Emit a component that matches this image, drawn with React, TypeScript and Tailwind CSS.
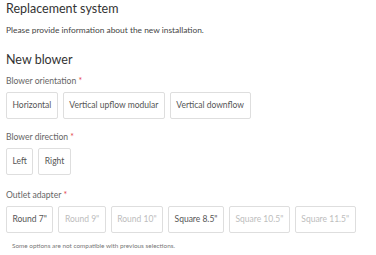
import React from 'react';

interface Option {
  label: string;
  disabled?: boolean;
}

const ORIENTATIONS: Option[] = [
  { label: 'Horizontal' },
  { label: 'Vertical upflow modular' },
  { label: 'Vertical downflow' },
];

const DIRECTIONS: Option[] = [{ label: 'Left' }, { label: 'Right' }];

const ADAPTERS: Option[] = [
  { label: 'Round 7"' },
  { label: 'Round 9"', disabled: true },
  { label: 'Round 10"', disabled: true },
  { label: 'Square 8.5"' },
  { label: 'Square 10.5"', disabled: true },
  { label: 'Square 11.5"', disabled: true },
];

function FieldLabel({ children }: { children: React.ReactNode }) {
  return (
    <div className="text-[8.6px] leading-[12px] text-[#666]">
      {children} <span className="text-[#e5484d]">*</span>
    </div>
  );
}

function OptionGroup({ options }: { options: Option[] }) {
  return (
    <div className="flex flex-wrap gap-[5px] mt-[5px]">
      {options.map((o) => (
        <button
          key={o.label}
          className={`h-[27px] px-[5.5px] rounded-[2px] border border-[#dedede] bg-white text-[8.5px] ${
            o.disabled ? 'text-[#bdbdbd]' : 'text-[#555]'
          }`}
        >
          {o.label}
        </button>
      ))}
    </div>
  );
}

export default function App() {
  return (
    <div className="w-[376px] h-[255px] bg-white px-[6px] pt-[1px]" style={{ fontFamily: "Lato, 'Open Sans', sans-serif" }}>
      <h2 className="text-[12.5px] leading-[15px] text-[#333]">Replacement system</h2>
      <p className="text-[8.4px] leading-[11px] text-[#444] mt-[9px]">Please provide information about the new installation.</p>

      <h3 className="text-[12.5px] leading-[15px] text-[#333] mt-[16px]">New blower</h3>

      <div className="mt-[8px]">
        <FieldLabel>Blower orientation</FieldLabel>
        <OptionGroup options={ORIENTATIONS} />
      </div>

      <div className="mt-[12px]">
        <FieldLabel>Blower direction</FieldLabel>
        <OptionGroup options={DIRECTIONS} />
      </div>

      <div className="mt-[14px]">
        <FieldLabel>Outlet adapter</FieldLabel>
        <OptionGroup options={ADAPTERS} />
      </div>

      <p className="text-[6.4px] leading-[9px] text-[#777] mt-[8px] pl-[6px]">Some options are not compatible with previous selections.</p>
    </div>
  );
}
